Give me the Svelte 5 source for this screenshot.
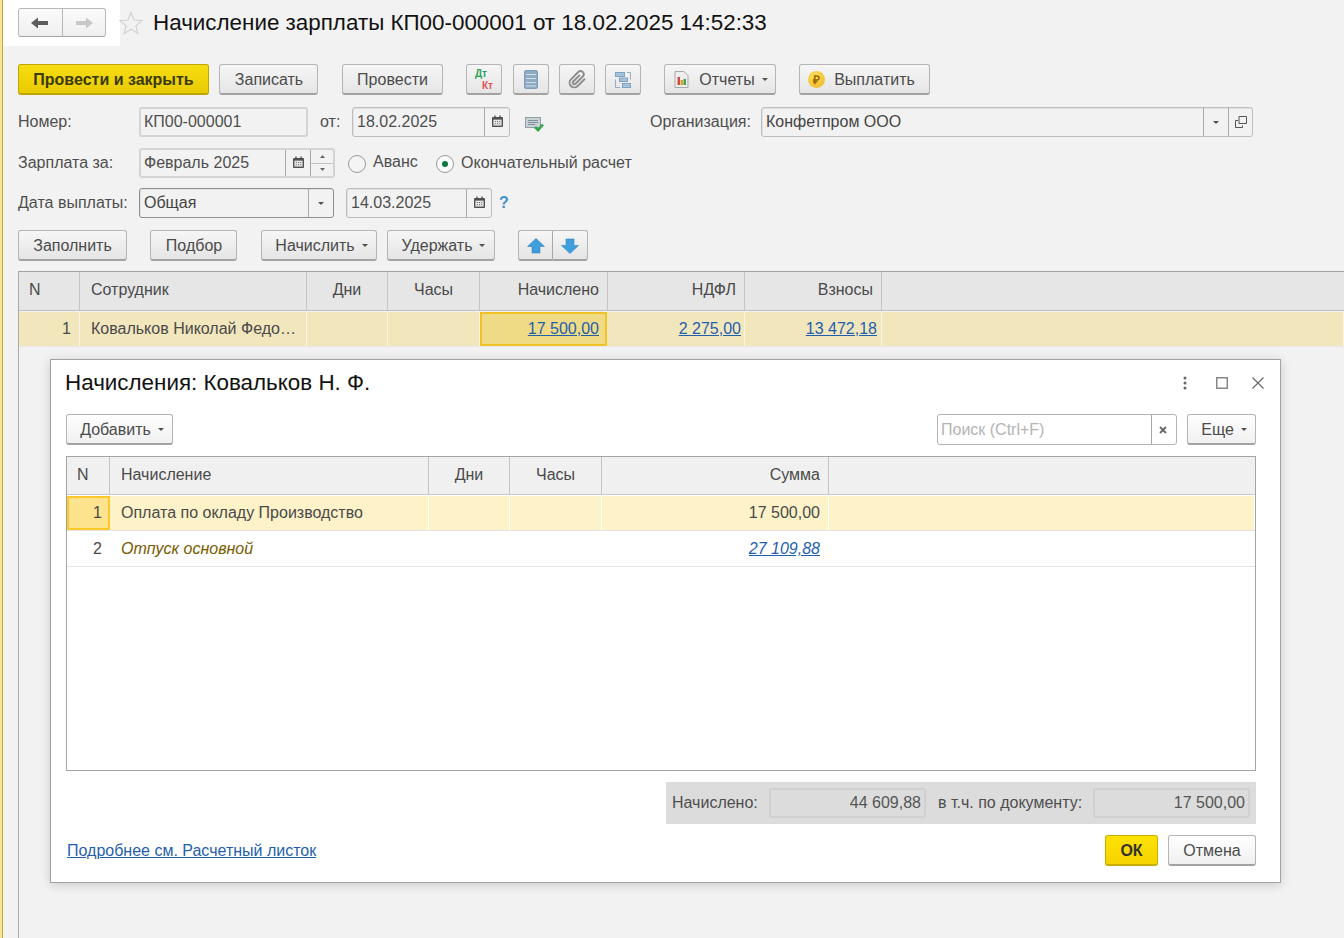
<script>
  const mainCols = [
    { t: 'N', a: 'l' }, { t: 'Сотрудник', a: 'l' }, { t: 'Дни', a: 'c' }, { t: 'Часы', a: 'c' },
    { t: 'Начислено', a: 'r' }, { t: 'НДФЛ', a: 'r' }, { t: 'Взносы', a: 'r' }, { t: '', a: 'l' }
  ];
  const dlgCols = [
    { t: 'N', a: 'l' }, { t: 'Начисление', a: 'l' }, { t: 'Дни', a: 'c' }, { t: 'Часы', a: 'c' },
    { t: 'Сумма', a: 'r' }, { t: '', a: 'l' }
  ];
</script>

{#snippet cal()}
  <svg class="ico" width="11" height="12" viewBox="0 0 12 13" aria-hidden="true">
    <path d="M1 2h10a1 1 0 0 1 1 1v9a1 1 0 0 1-1 1H1a1 1 0 0 1-1-1V3a1 1 0 0 1 1-1z" fill="#505050"/>
    <rect x="2.500" y="0.500" width="1.500" height="3" fill="#505050"/><rect x="8" y="0.500" width="1.500" height="3" fill="#505050"/>
    <rect x="1.500" y="5" width="9" height="6.500" fill="#e8e8e8"/>
    <path d="M3 6.500h1.200v1H3zM5.400 6.500h1.200v1H5.400zM7.800 6.500H9v1H7.800zM3 9h1.200v1H3zM5.400 9h1.200v1H5.400zM7.800 9H9v1H7.800z" fill="#666"/>
  </svg>
{/snippet}

{#snippet caret()}
  <svg class="caret" width="6" height="3" viewBox="0 0 6 3" aria-hidden="true"><path d="M0 0h6L3 3z" fill="#505050"/></svg>
{/snippet}

<div class="shell">
  <div class="main">
    <header class="head">
      <div class="navblock">
        <div class="nav">
          <button class="navbtn">
            <svg width="18" height="12" viewBox="0 0 18 12" aria-hidden="true"><path d="M0 6l7-5.500V4h10v4H7v3.500z" fill="#5c5c5c"/></svg>
          </button>
          <button class="navbtn">
            <svg width="18" height="12" viewBox="0 0 18 12" aria-hidden="true"><path d="M18 6l-7-5.500V4H1v4h10v3.500z" fill="#c8c8c8"/></svg>
          </button>
        </div>
      </div>
      <svg class="star" width="24" height="24" viewBox="0 0 24 24" aria-hidden="true"><path d="M12 1.500l3 7.500 8 .6-6.100 5.100 1.900 7.800L12 18.300 5.200 22.500l1.900-7.800L1 9.600l8-.6z" fill="none" stroke="#d2d2d2" stroke-width="1.200"/></svg>
      <h1 class="title">Начисление зарплаты КП00-000001 от 18.02.2025 14:52:33</h1>
    </header>

    <div class="row toolbar">
      <button class="btn primary w-post">Провести и закрыть</button>
      <button class="btn w-save ml10">Записать</button>
      <button class="btn w-prov ml24">Провести</button>
      <button class="btn w-ic ml23 dtkt"><span class="dt">Дт</span><span class="kt">Кт</span></button>
      <button class="btn w-ic ml11">
        <svg width="14" height="19" viewBox="0 0 14 19" aria-hidden="true"><rect x="0.500" y="0.500" width="13" height="18" rx="1.500" fill="#8fabc4" stroke="#7f9db8"/><path d="M2 4h10v1H2zM2 8h10v1H2zM2 12h10v1H2zM2 15.500h10v1H2z" fill="#d4dfe9"/></svg>
      </button>
      <button class="btn w-ic ml10">
        <svg width="19" height="19" viewBox="0 0 24 24" aria-hidden="true"><path d="M21.440 11.050l-9.190 9.190a6 6 0 0 1-8.490-8.490l9.190-9.190a4 4 0 0 1 5.660 5.660l-9.200 9.190a2 2 0 0 1-2.830-2.830l8.490-8.480" fill="none" stroke="#8c8c8c" stroke-width="2.400"/></svg>
      </button>
      <button class="btn w-ic ml10">
        <svg width="18" height="18" viewBox="0 0 18 18" aria-hidden="true"><g fill="#a7c1d8" stroke="#7fa3c2" stroke-width="1"><rect x="1.500" y="1.500" width="9" height="4"/><rect x="5.500" y="7" width="8" height="3.500"/><rect x="8.500" y="12.500" width="8" height="4"/></g><path d="M13 1.500h3.500v7M1.500 8.500v8h4.500" fill="none" stroke="#8fadc7" stroke-width="1"/></svg>
      </button>
      <button class="btn w-rep ml23">
        <svg class="bi" width="15" height="17" viewBox="0 0 15 17" aria-hidden="true"><path d="M1 .5h9l4 4v12H1z" fill="#eee" stroke="#a9a9a9"/><rect x="3.500" y="6" width="2.500" height="8" fill="#c8503c"/><rect x="6.500" y="9" width="2.500" height="5" fill="#d9a030"/><rect x="9.500" y="8" width="2.500" height="6" fill="#4aa050"/></svg>
        <span>Отчеты</span>{@render caret()}
      </button>
      <button class="btn w-pay ml23">
        <span class="coin">₽</span><span>Выплатить</span>
      </button>
    </div>

    <div class="row r1">
      <span class="lbl w-lbl">Номер:</span>
      <div class="field ro w-num"><span class="val">КП00-000001</span></div>
      <span class="lbl w-ot">от:</span>
      <div class="field w-date">
        <span class="val grow">18.02.2025</span>
        <span class="fb w-fb25">{@render cal()}</span>
      </div>
      <svg class="chk" width="20" height="16" viewBox="0 0 20 16" aria-hidden="true"><rect x="0.500" y="1.500" width="15" height="10" fill="#c9d1d6" stroke="#8fa0a8"/><path d="M3 4.500h10M3 6.500h10M3 8.500h7" stroke="#7f8f98"/><path d="M10 11l3 3 5-5.500" fill="none" stroke="#2ea84a" stroke-width="2.600"/></svg>
      <span class="lbl w-org">Организация:</span>
      <div class="field w-orgf">
        <span class="val grow dark">Конфетпром ООО</span>
        <span class="fb w-fb25">{@render caret()}</span>
        <span class="fb w-fb24">
          <svg width="12" height="12" viewBox="0 0 12 12" aria-hidden="true"><path d="M4 .5h7.500v7H4z" fill="none" stroke="#555"/><path d="M.5 4.500v7h7V9.500M.5 4.500H3" fill="none" stroke="#555"/></svg>
        </span>
      </div>
    </div>

    <div class="row r2">
      <span class="lbl w-lbl">Зарплата за:</span>
      <div class="field ro w-per">
        <span class="val grow">Февраль 2025</span>
        <span class="fb w-fb25">{@render cal()}</span>
        <span class="fb w-spin spin">
          <span class="sp"><svg width="5" height="3" viewBox="0 0 5 3" aria-hidden="true"><path d="M0 3h5L2.500 0z" fill="#666"/></svg></span>
          <span class="sp"><svg width="5" height="3" viewBox="0 0 5 3" aria-hidden="true"><path d="M0 0h5L2.500 3z" fill="#666"/></svg></span>
        </span>
      </div>
      <span class="radio ml13"></span>
      <span class="lbl rtext ml7 w-av">Аванс</span>
      <span class="radio on"><i></i></span>
      <span class="lbl ml7">Окончательный расчет</span>
    </div>

    <div class="row r3">
      <span class="lbl w-lbl">Дата выплаты:</span>
      <div class="field strong w-sel">
        <span class="val grow dark">Общая</span>
        <span class="fb w-fb25">{@render caret()}</span>
      </div>
      <div class="field w-d2 ml12">
        <span class="val grow">14.03.2025</span>
        <span class="fb w-fb25">{@render cal()}</span>
      </div>
      <span class="help">?</span>
    </div>

    <div class="row r4">
      <button class="btn w-fill">Заполнить</button>
      <button class="btn w-pick ml23">Подбор</button>
      <button class="btn dd w-acc ml24"><span>Начислить</span>{@render caret()}</button>
      <button class="btn dd w-ded ml10"><span>Удержать</span>{@render caret()}</button>
      <div class="pair ml23">
        <button class="btn w-ar l">
          <svg width="18" height="16" viewBox="0 0 18 16" aria-hidden="true"><path d="M9 .5L17.500 8.500H13v6.500H5V8.500H.5z" fill="#3f9fdc" stroke="#3483bd" stroke-width=".6"/></svg>
        </button>
        <button class="btn w-ar r">
          <svg width="18" height="16" viewBox="0 0 18 16" aria-hidden="true"><path d="M9 15.500L17.500 7.500H13V1H5v6.500H.5z" fill="#3f9fdc" stroke="#3483bd" stroke-width=".6"/></svg>
        </button>
      </div>
    </div>

    <section class="grid-main">
      <div class="thead tm">
        {#each mainCols as c}
          <div class="th {c.a}">{c.t}</div>
        {/each}
      </div>
      <div class="trow tm main-row">
        <div class="td r n1">1</div>
        <div class="td l">Ковальков Николай Федо…</div>
        <div class="td"></div>
        <div class="td"></div>
        <div class="td r cur"><a href="#a">17 500,00</a></div>
        <div class="td r lnk"><a href="#a">2 275,00</a></div>
        <div class="td r lnk lnk2"><a href="#a">13 472,18</a></div>
        <div class="td"></div>
      </div>
    </section>

    <div class="dialog">
      <div class="dhead">
        <h2 class="dtitle">Начисления: Ковальков Н. Ф.</h2>
        <div class="wctl">
          <svg class="dots" width="4" height="14" viewBox="0 0 4 14" aria-hidden="true"><circle cx="2" cy="2" r="1.500" fill="#666"/><circle cx="2" cy="7" r="1.500" fill="#666"/><circle cx="2" cy="12" r="1.500" fill="#666"/></svg>
          <svg width="12" height="12" viewBox="0 0 12 12" aria-hidden="true"><rect x=".75" y=".75" width="10.500" height="10.500" fill="none" stroke="#888" stroke-width="1.500"/></svg>
          <svg width="12" height="12" viewBox="0 0 12 12" aria-hidden="true"><path d="M.5.5l11 11M11.500.5l-11 11" stroke="#666" stroke-width="1.100"/></svg>
        </div>
      </div>
      <div class="dtools">
        <button class="btn lite dd w-add"><span>Добавить</span>{@render caret()}</button>
        <div class="search">
          <span class="ph grow">Поиск (Ctrl+F)</span>
          <span class="fb w-x">
            <svg width="8" height="8" viewBox="0 0 8 8" aria-hidden="true"><path d="M1 1l6 6M7 1L1 7" stroke="#666" stroke-width="1.800"/></svg>
          </span>
        </div>
        <button class="btn lite dd w-more"><span>Еще</span>{@render caret()}</button>
      </div>

      <section class="grid-dlg">
        <div class="thead td-h tdl">
          {#each dlgCols as c}
            <div class="th {c.a}">{c.t}</div>
          {/each}
        </div>
        <div class="trow tdl dr1">
          <div class="td r cur2">1</div>
          <div class="td l">Оплата по окладу Производство</div>
          <div class="td"></div>
          <div class="td"></div>
          <div class="td r sum">17 500,00</div>
          <div class="td"></div>
        </div>
        <div class="trow tdl dr2">
          <div class="td r n2">2</div>
          <div class="td l it">Отпуск основной</div>
          <div class="td"></div>
          <div class="td"></div>
          <div class="td r sum"><a href="#a" class="itl">27 109,88</a></div>
          <div class="td"></div>
        </div>
      </section>

      <div class="totals">
        <span class="lbl w-t1">Начислено:</span>
        <div class="tf">44 609,88</div>
        <span class="lbl w-t2">в т.ч. по документу:</span>
        <div class="tf">17 500,00</div>
      </div>

      <div class="dfoot">
        <a href="#a" class="more">Подробнее см. Расчетный листок</a>
        <button class="btn okb">ОК</button>
        <button class="btn lite w-cancel">Отмена</button>
      </div>
    </div>
  </div>
</div>

<style>
  :global(body) { margin: 0; background: #f2f2f2; }
  .shell {
    width: 1344px; height: 938px; box-sizing: border-box; overflow: hidden;
    border-left: 2px solid #f6e68c; background: #f2f2f2;
    font-family: "Liberation Sans", Arial, sans-serif; font-size: 16px; color: #4b4b4b;
  }
  .main {
    position: relative; height: 100%; box-sizing: border-box;
    border-left: 1px solid #bda93e; display: flex; flex-direction: column;
  }
  button { font: inherit; color: inherit; margin: 0; cursor: default; }
  h1, h2 { margin: 0; font-weight: 400; color: #111; }

  .head { display: flex; align-items: flex-start; height: 46px; flex: none; }
  .navblock { width: 117px; height: 46px; background: #fff; box-sizing: border-box; padding: 8px 0 0 15px; flex: none; }
  .nav { display: flex; width: 88px; height: 29px; }
  .navbtn {
    flex: 1; height: 29px; padding: 0; display: flex; align-items: center; justify-content: center;
    background: linear-gradient(#fbfbfb, #efefef); border: 1px solid #b8b8b8; border-bottom-color: #a4a4a4; border-radius: 3px 0 0 3px;
  }
  .navbtn + .navbtn { border-left: 0; border-radius: 0 3px 3px 0; }
  .star { margin: 11px 0 0 -1px; flex: none; }
  .title { font-size: 22.400px; line-height: 26px; margin: 10px 0 0 10px; white-space: nowrap; }

  .row { display: flex; align-items: center; padding-left: 15px; flex: none; }
  .toolbar { margin-top: 18px; height: 31px; }
  .r1 { margin-top: 12px; height: 30px; }
  .r2 { margin-top: 11px; height: 30px; }
  .r3 { margin-top: 10px; height: 30px; }
  .r4 { margin-top: 12px; height: 31px; }

  .btn {
    height: 31px; box-sizing: border-box; padding: 1px 0 0; display: inline-flex; align-items: center; justify-content: center; flex: none;
    background: linear-gradient(#f6f6f6, #e5e5e5);
    border: 1px solid #b5b5b5; border-bottom: 2px solid #a2a2a2; border-radius: 3px; white-space: nowrap;
  }
  .btn.lite { background: linear-gradient(#fff, #f0f0f0); }
  .btn.dd { padding-left: 5px; }
  .primary { background: linear-gradient(#f6dd12, #e8cb00); border-color: #bfa600; font-weight: 700; color: #3a3a10; }
  .okb { background: linear-gradient(#ffe200, #f5d400); border-color: #c9ad00; font-weight: 700; color: #333; width: 53px; margin-left: auto; }
  .w-post { width: 191px; } .w-save { width: 99px; padding-left: 1px; } .w-prov { width: 101px; }
  .w-ic { width: 36px; } .w-rep { width: 112px; padding-left: 2px; } .w-pay { width: 131px; padding-right: 6px; }
  .w-fill { width: 109px; } .w-pick { width: 87px; padding-left: 1px; } .w-acc { width: 116px; } .w-ded { width: 108px; }
  .ml7 { margin-left: 7px; } .ml10 { margin-left: 10px; } .ml11 { margin-left: 11px; } .ml12 { margin-left: 12px; }
  .ml13 { margin-left: 13px; } .ml23 { margin-left: 23px; } .ml24 { margin-left: 24px; }

  .dtkt { position: relative; font-size: 10px; font-weight: 700; line-height: 9px; }
  .dt { position: absolute; left: 8px; top: 4px; color: #2ca05a; }
  .kt { position: absolute; left: 15px; top: 16px; color: #e0525a; }
  .bi { margin-right: 10px; }
  .caret { margin-left: 7px; flex: none; }
  .coin {
    width: 17px; height: 17px; border-radius: 50%; margin-right: 9px; display: inline-flex; align-items: center; justify-content: center;
    background: radial-gradient(circle at 40% 35%, #fde25f, #eeb21e); color: #9c6500; font-size: 12px; font-weight: 700;
  }

  .lbl { white-space: nowrap; color: #4e4e4e; flex: none; }
  .w-lbl { width: 121px; }
  .w-ot { width: 32px; margin-left: 12px; }
  .w-org { margin-left: 105px; width: 111px; }
  .field {
    height: 30px; box-sizing: border-box; display: flex; align-items: stretch; flex: none;
    border: 1px solid #bdbdbd; border-radius: 3px; background: #f2f2f2;
    box-shadow: inset 1px 1px 0 #e2e2e2;
  }
  .field.ro { border: 2px solid #d4d4d4; box-shadow: none; }
  .field.strong { border-color: #8f8f8f; }
  .val { padding-left: 4px; line-height: 28px; color: #4e4e4e; white-space: nowrap; }
  .ro .val { padding-left: 3px; line-height: 26px; }
  .val.dark { color: #444; }
  .grow { flex: 1; min-width: 0; }
  .fb { display: flex; align-items: center; justify-content: center; flex: none; border-left: 1px solid #a8a8a8; box-sizing: border-box; }
  .fb .caret { margin: 0; }
  .fb .ico { margin-top: -2px; }
  .w-fb25 { width: 25px; }
  .w-fb24 { width: 24px; }
  .w-spin { width: 23px; }
  .w-num { width: 169px; } .w-date { width: 158px; } .w-orgf { width: 492px; }
  .w-per { width: 196px; } .w-sel { width: 195px; } .w-d2 { width: 146px; }
  .chk { margin-left: 15px; flex: none; margin-top: 3px; }
  .spin { flex-direction: column; }
  .sp { flex: 1; width: 100%; display: flex; align-items: center; justify-content: center; }
  .sp + .sp { border-top: 1px solid #c4c4c4; }
  .radio {
    width: 18px; height: 18px; box-sizing: border-box; border-radius: 50%; border: 1px solid #9a9a9a; background: #f4f4f4; flex: none;
    display: inline-flex; align-items: center; justify-content: center; margin-top: 2px;
  }
  .radio.on { background: #fafafa; }
  .radio i { width: 6px; height: 6px; border-radius: 50%; background: #0f7a40; }
  .rtext { margin-top: -2px; }
  .w-av { width: 63px; }
  .help { color: #3f93c9; font-weight: 700; margin-left: 7px; font-size: 16px; margin-top: -1px; }
  .pair { display: flex; }
  .w-ar { width: 35px; }
  .w-ar.l { border-radius: 3px 0 0 3px; border-right: 1px solid #a8a8a8; }
  .w-ar.r { border-radius: 0 3px 3px 0; border-left: 0; }

  .grid-main {
    margin: 10px 0 0 15px; flex: 1; border-left: 1px solid #aaa; border-top: 1px solid #a4a4a4;
  }
  .tm { display: grid; grid-template-columns: 61px 227px 81px 92px 128px 137px 137px 1fr; }
  .thead { height: 38px; background: #e6e6e6; border-bottom: 1px solid #c0c0c0; }
  .th { line-height: 36px; padding: 0 8px 0 10px; border-right: 1px solid #c4c4c4; white-space: nowrap; color: #4a4a4a; }
  .th:nth-child(2) { padding-left: 11px; }
  .th.c { text-align: center; padding: 0; }
  .th.r { text-align: right; }
  .th:last-child { border-right: 0; }
  .main-row { height: 34px; background: #f2e6bd; border-top: 1px solid #f2f2f2; border-bottom: 1px solid #e8e8e8; }
  .trow .td { line-height: 34px; padding: 0 8px 0 10px; border-right: 1px solid #f7f4e8; box-sizing: border-box; white-space: nowrap; overflow: hidden; color: #4a4a4a; }
  .trow .td:nth-child(2) { padding-left: 11px; }
  .trow .td.r { text-align: right; }
  .trow .lnk { padding-right: 3px; }
  .trow .lnk2 { padding-right: 4px; }
  .trow .cur { background: #efda86; border: 2px solid #f0c224; line-height: 30px; padding-right: 6px; margin-right: 1px; }
  a { color: #1f5fae; text-decoration: underline; }

  .dialog {
    position: absolute; left: 47px; top: 359px; width: 1231px; height: 524px; box-sizing: border-box;
    background: #fff; border: 1px solid #a2a2a2; box-shadow: 0 2px 10px rgba(0,0,0,.16);
    display: flex; flex-direction: column; padding: 0 24px 0 15px;
  }
  .dhead { height: 54px; flex: none; display: flex; align-items: flex-start; }
  .dtitle { font-size: 22.400px; line-height: 26px; margin: 10px 0 0 -1px; white-space: nowrap; }
  .wctl { margin-left: auto; margin-right: -8px; display: flex; align-items: center; gap: 24px; height: 14px; margin-top: 16px; }
  .dots { margin-right: 5px; }
  .dtools { display: flex; height: 31px; flex: none; }
  .w-add { width: 107px; }
  .search {
    margin-left: auto; width: 240px; height: 31px; box-sizing: border-box; display: flex; border: 1px solid #b4b4b4; border-radius: 3px; background: #fff;
  }
  .ph { color: #b4b4b4; line-height: 29px; padding-left: 3px; }
  .w-x { width: 25px; padding-right: 2px; }
  .w-more { width: 69px; margin-left: 10px; }

  .grid-dlg { margin-top: 11px; height: 315px; flex: none; box-sizing: border-box; border: 1px solid #a4a4a4; }
  .tdl { display: grid; grid-template-columns: 43px 319px 81px 92px 227px 1fr; }
  .td-h { height: 37px; background: #f0f0f0; border-bottom: 1px solid #c8c8c8; }
  .dr1 { height: 34px; margin-top: 1px; background: #fdf2c8; border-bottom: 1px solid #e4e4e4; }
  .trow.dr1 .td { border-right: 1px solid #fff; }
  .dr2 { height: 35px; border-bottom: 1px solid #e4e4e4; }
  .trow.dr2 .td { border-right: 0; line-height: 36px; }
  .trow .cur2 { background: #fde38e; border: 2px solid #fcc92a; line-height: 30px; padding-right: 6px; }
  .trow.dr1 .cur2 { border: 2px solid #fcc92a; }
  .trow.dr2 .sum { padding-right: 9px; }
  .trow .it { font-style: italic; color: #7a5a00; }
  .itl { font-style: italic; }

  .totals {
    margin: 11px 0 0 auto; width: 590px; height: 42px; box-sizing: border-box; background: #dcdcdc; flex: none;
    display: flex; align-items: center; padding: 0 6px;
  }
  .w-t1 { width: 97px; } .w-t2 { width: 155px; margin-left: 12px; }
  .tf {
    flex: none; width: 157px; height: 30px; box-sizing: border-box; border: 2px solid #d0d0d0; border-radius: 3px; text-align: right;
    padding-right: 3px; line-height: 26px; color: #555;
  }
  .dfoot { display: flex; align-items: center; margin-top: 11px; height: 31px; flex: none; }
  .more { margin-left: 1px; }
  .w-cancel { width: 88px; margin-left: 10px; }
</style>
